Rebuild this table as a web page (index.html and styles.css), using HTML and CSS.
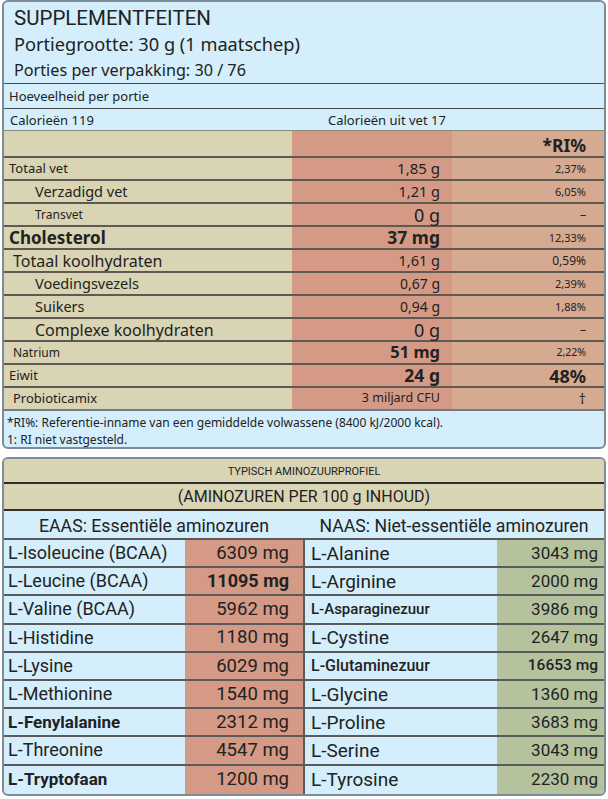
FILE: index.html
```html
<!DOCTYPE html>
<html lang="nl">
<head>
<meta charset="utf-8">
<title>Supplementfeiten</title>
<link rel="stylesheet" href="styles.css">
</head>
<body>
<section class="panel facts">
  <div class="head">
    <h1 class="title">SUPPLEMENTFEITEN</h1>
    <p class="serving">Portiegrootte: 30 g (1 maatschep)</p>
    <p class="servings">Porties per verpakking: 30 / 76</p>
  </div>
  <div class="amount">Hoeveelheid per portie</div>
  <div class="cal">
    <span class="cal-a">Calorieën 119</span>
    <span class="cal-b">Calorieën uit vet 17</span>
  </div>
  <div class="nt">
    <div class="r hdr"><span class="l"></span><span class="m"></span><span class="p ri">*RI%</span></div>
    <div class="r"><span class="l s13 i1">Totaal vet</span><span class="m s15">1,85 g</span><span class="p s11">2,37%</span></div>
    <div class="r"><span class="l s145 i3">Verzadigd vet</span><span class="m s145">1,21 g</span><span class="p s11">6,05%</span></div>
    <div class="r"><span class="l s12 i3">Transvet</span><span class="m s18">0 g</span><span class="p s12">–</span></div>
    <div class="r"><span class="l s17 b i1">Cholesterol</span><span class="m s175 b">37 mg</span><span class="p s11">12,33%</span></div>
    <div class="r"><span class="l s16 i2">Totaal koolhydraten</span><span class="m s145">1,61 g</span><span class="p s12">0,59%</span></div>
    <div class="r"><span class="l s145 i3">Voedingsvezels</span><span class="m s14">0,67 g</span><span class="p s11">2,39%</span></div>
    <div class="r"><span class="l s145 i3">Suikers</span><span class="m s14">0,94 g</span><span class="p s11">1,88%</span></div>
    <div class="r"><span class="l s16 i3">Complexe koolhydraten</span><span class="m s18">0 g</span><span class="p s12">–</span></div>
    <div class="r"><span class="l s12 i2">Natrium</span><span class="m s165 b">51 mg</span><span class="p s105">2,22%</span></div>
    <div class="r"><span class="l s13 i1">Eiwit</span><span class="m s175 b">24 g</span><span class="p s18 b">48%</span></div>
    <div class="r last"><span class="l s13 i2">Probioticamix</span><span class="m s125">3 miljard CFU</span><span class="p s14">†</span></div>
  </div>
  <div class="notes">
    <p>*RI%: Referentie-inname van een gemiddelde volwassene (8400 kJ/2000 kcal).</p>
    <p>1: RI niet vastgesteld.</p>
  </div>
</section>

<section class="panel amino">
  <div class="a-title">TYPISCH AMINOZUURPROFIEL</div>
  <div class="a-sub">(AMINOZUREN PER 100 g INHOUD)</div>
  <div class="a-heads">
    <div class="a-h">EAAS: Essentiële aminozuren</div>
    <div class="a-h">NAAS: Niet-essentiële aminozuren</div>
  </div>
  <div class="a-rows">
    <div class="ar"><span class="n">L-Isoleucine (BCAA)</span><span class="v ve">6309 mg</span><span class="n n2">L-Alanine</span><span class="v vn">3043 mg</span></div>
    <div class="ar"><span class="n">L-Leucine (BCAA)</span><span class="v ve sb">11095 mg</span><span class="n n2">L-Arginine</span><span class="v vn">2000 mg</span></div>
    <div class="ar"><span class="n">L-Valine (BCAA)</span><span class="v ve">5962 mg</span><span class="n n2 sm">L-Asparaginezuur</span><span class="v vn">3986 mg</span></div>
    <div class="ar"><span class="n">L-Histidine</span><span class="v ve">1180 mg</span><span class="n n2">L-Cystine</span><span class="v vn">2647 mg</span></div>
    <div class="ar"><span class="n">L-Lysine</span><span class="v ve">6029 mg</span><span class="n n2 md">L-Glutaminezuur</span><span class="v vn mdv">16653 mg</span></div>
    <div class="ar"><span class="n">L-Methionine</span><span class="v ve">1540 mg</span><span class="n n2">L-Glycine</span><span class="v vn">1360 mg</span></div>
    <div class="ar"><span class="n bd">L-Fenylalanine</span><span class="v ve">2312 mg</span><span class="n n2">L-Proline</span><span class="v vn">3683 mg</span></div>
    <div class="ar"><span class="n">L-Threonine</span><span class="v ve">4547 mg</span><span class="n n2">L-Serine</span><span class="v vn">3043 mg</span></div>
    <div class="ar"><span class="n bd">L-Tryptofaan</span><span class="v ve">1200 mg</span><span class="n n2">L-Tyrosine</span><span class="v vn">2230 mg</span></div>
  </div>
</section>
</body>
</html>
```

FILE: styles.css
```css
* { box-sizing: border-box; }
html, body { margin: 0; padding: 0; background: #ffffff; }
body {
  width: 608px;
  font-family: Roboto, "Noto Sans", Arial, sans-serif;
  color: #222;
}
p, h1 { margin: 0; }

.panel {
  margin: 0 2px;
  border: 2px solid #7d8c97;
  border-radius: 6px;
  background: #d4eefb;
  overflow: hidden;
}

/* ---- top facts panel ---- */
.facts { height: 449px; font-family: "Noto Sans", Roboto, Arial, sans-serif; }
.head { padding: 3px 0 0 10px; height: 82px; border-bottom: 1px solid #4a4a4a; }
.title { font-family: Roboto, Arial, sans-serif; font-size: 20.5px; font-weight: 400; line-height: 26px; }
.serving { font-size: 18.2px; line-height: 27px; }
.servings { font-size: 16.2px; line-height: 24px; }
.amount { font-size: 13px; height: 25px; line-height: 24px; padding-left: 5px; border-bottom: 1px solid #4a4a4a; }
.cal { height: 22px; display: flex; align-items: center; font-size: 13px; border-bottom: 1px solid #8a8a7a; }
.cal-a { width: 324px; padding-left: 6px; }

.nt { display: flex; flex-direction: column; }
.r {
  display: grid;
  grid-template-columns: 288px 160px 1fr;
  grid-template-rows: 21px;
  height: 23px;
  border-bottom: 2px solid #5e5a52;
}
.r.hdr { height: 27px; grid-template-rows: 25px; }
.r.last { border-bottom: 2px solid #6e7a84; }
.r > span {
  display: flex; align-items: center; white-space: nowrap;
  line-height: 1; min-height: 0;
}
.l { background: #d9d4b3; }
.m { background: #d49a86; justify-content: flex-end; padding-right: 12px; }
.p { background: #d6aa91; justify-content: flex-end; padding-right: 18px; }
.ri { font-size: 17.5px; font-weight: 700; padding-top: 4px; }
.i1 { padding-left: 5px; }
.i2 { padding-left: 9px; }
.i3 { padding-left: 31px; }
.b { font-weight: 700; }
.s105 { font-size: 10.5px; }
.s11 { font-size: 11px; }
.s12 { font-size: 12px; }
.s125 { font-size: 12.5px; }
.s13 { font-size: 13px; }
.s14 { font-size: 14px; }
.s145 { font-size: 14.5px; }
.s15 { font-size: 15px; }
.s16 { font-size: 16px; }
.s165 { font-size: 16.5px; }
.s17 { font-size: 17px; }
.s175 { font-size: 17.5px; }
.s18 { font-size: 18px; }

.notes { padding: 3px 0 0 3px; font-size: 12px; line-height: 17px; }

/* ---- amino panel ---- */
.amino { margin-top: 8px; height: 339px; }
.a-title {
  background: #d9d4b3; height: 25px; line-height: 25px;
  text-align: center; font-size: 11px; border-bottom: 2px solid #2e2e2e;
}
.a-sub {
  background: #d9d4b3; height: 27px; line-height: 26px;
  text-align: center; font-size: 16px; border-bottom: 2px solid #2e2e2e;
}
.a-heads { display: flex; height: 29px; border-bottom: 2px solid #5a5a5a; }
.a-h { flex: 1; display: flex; align-items: center; justify-content: center; font-size: 17.7px; padding-top: 2px; }
.a-rows { display: flex; flex-direction: column; }
.ar {
  display: grid;
  grid-template-columns: 181px 118px 194px 1fr;
  height: 28.2px;
  border-bottom: 2px solid #5a5a5a;
}
.ar:last-child { border-bottom: none; }
.ar > span { display: flex; align-items: center; white-space: nowrap; font-size: 18px; line-height: 1; }
.n { padding-left: 4px; }
.n2 { border-left: 2px solid #5a5a5a; padding-left: 6px; font-size: 19px !important; }
.v { justify-content: flex-end; padding-right: 14px; }
.ve { background: #d49a85; font-size: 18.5px !important; }
.vn { background: #b5c29e; padding-right: 6px; font-size: 17px !important; }
.sb { font-weight: 700; font-size: 18px !important; }
.bd { font-weight: 700; font-size: 17px !important; }
.sm { font-size: 15px !important; font-weight: 500; }
.md { font-size: 16px !important; font-weight: 500; }
.mdv { font-size: 15.5px !important; font-weight: 500; }
```
